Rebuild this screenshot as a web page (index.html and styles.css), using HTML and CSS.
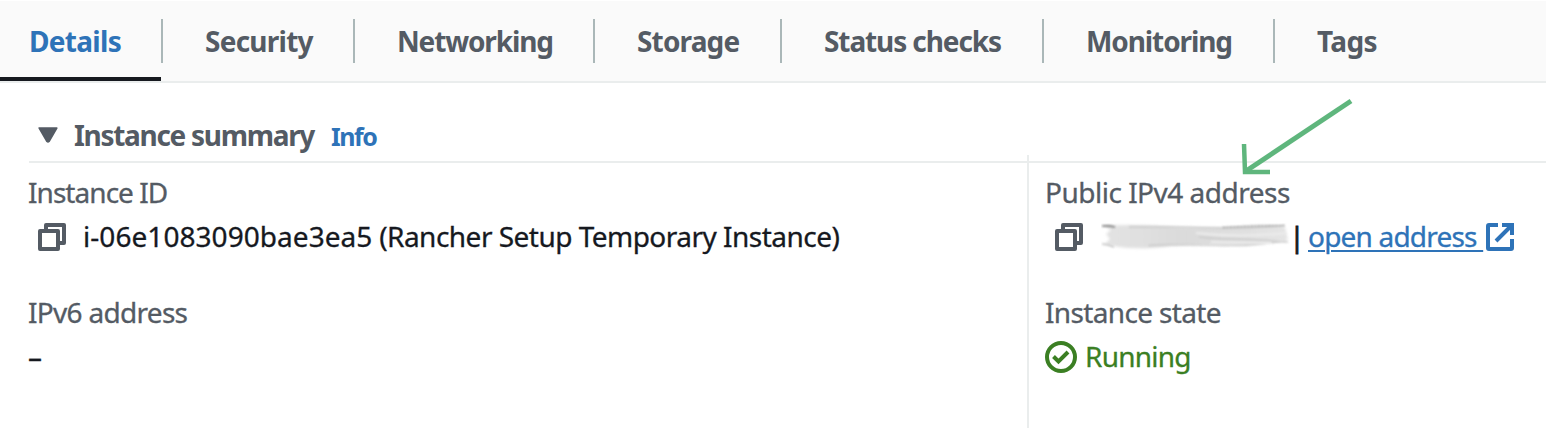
FILE: index.html
```html
<!DOCTYPE html>
<html lang="en">
<head>
<meta charset="utf-8">
<title>Instance details</title>
<link rel="stylesheet" href="styles.css">
</head>
<body>
<nav class="tabs">
  <a class="tab active t-details">Details</a>
  <a class="tab t-security">Security</a>
  <a class="tab t-networking">Networking</a>
  <a class="tab t-storage">Storage</a>
  <a class="tab t-status">Status checks</a>
  <a class="tab t-monitoring">Monitoring</a>
  <a class="tab t-tags">Tags</a>
</nav>
<main class="panel">
  <header class="summary">
    <svg class="caret" width="20" height="16" viewBox="0 0 20 16"><path d="M1.2 1h17.6L11 14.500q-1 1-2 0z" fill="#545b64" stroke="#545b64" stroke-width="1.600" stroke-linejoin="round"/></svg>
    <h2 class="title">Instance summary</h2>
    <a class="info">Info</a>
  </header>
  <div class="columns">
    <section class="column">
      <div class="field">
        <div class="label l-id">Instance ID</div>
        <div class="value">
          <svg class="copy" width="28" height="28" viewBox="0 0 28 28" fill="none" stroke="#545b64" stroke-width="4" stroke-linejoin="round"><path d="M8 7V2h18v18h-5"/><path d="M2 8h18v18H2z"/></svg>
          <div><span class="v-id">i-06e1083090bae3ea5</span><span class="v-name"> (Rancher Setup Temporary Instance)</span></div>
        </div>
      </div>
      <div class="field">
        <div class="label l-ipv6">IPv6 address</div>
        <div class="value">–</div>
      </div>
    </section>
    <section class="column right">
      <div class="field">
        <div class="label l-ipv4">Public IPv4 address</div>
        <div class="value">
          <svg class="copy" width="28" height="28" viewBox="0 0 28 28" fill="none" stroke="#545b64" stroke-width="4" stroke-linejoin="round"><path d="M8 7V2h18v18h-5"/><path d="M2 8h18v18H2z"/></svg>
          <svg class="smudge" width="190" height="32" viewBox="0 0 190 32">
            <defs>
              <filter id="soft" x="-5%" y="-20%" width="110%" height="140%"><feGaussianBlur stdDeviation="1.700"/></filter>
              <filter id="fine"><feGaussianBlur stdDeviation=".8"/></filter>
              <linearGradient id="tone"><stop offset="0" stop-color="#e2e2e2"/><stop offset=".2" stop-color="#e0e0e0"/><stop offset=".45" stop-color="#dadada"/><stop offset=".7" stop-color="#dfdfdf"/><stop offset="1" stop-color="#e4e4e4"/></linearGradient>
            </defs>
            <path d="M3 5Q22 3 60 5Q110 8 145 5Q170 3 184 6L187 19Q165 22 145 25Q110 23 70 25Q40 29 18 26L4 23L9 18L5 13L10 9Z" fill="url(#tone)" filter="url(#soft)"/>
            <g fill="none" filter="url(#fine)">
              <path d="M1 5Q8 4.500 14 6" stroke="#777" stroke-width="1.500"/>
              <path d="M1 23Q7 23 13 26" stroke="#c0c0c0" stroke-width="1.500"/>
              <path d="M28 6Q75 6 110 7T184 4.500" stroke="#c9c9c9" stroke-width="1.500"/>
              <path d="M122 6.500Q146 5 183 4.500" stroke="#888" stroke-width="1.300" stroke-dasharray="2 1.500"/>
              <path d="M48 24.500Q75 23 100 24T145 24T184 20" stroke="#bbb" stroke-width="1.300" stroke-dasharray="2 1"/>
              <path d="M98 16Q118 18 132 18T187 21" stroke="#cacaca" stroke-width="1.500"/>
              <path d="M95 12Q140 17 185 12M110 21Q140 22 170 22" stroke="#ececec" stroke-width="2"/>
            </g>
          </svg>
          <span class="bar">|</span>
          <a class="open">open address&nbsp;</a>
          <svg class="external" width="28" height="28" viewBox="0 0 28 28" fill="none" stroke="#2e73b8" stroke-width="4"><path d="M12 2H3Q2 2 2 3v22q0 1 1 1h22q1 0 1-1v-9"/><path d="M16 2h10v10M25 3 10 18"/></svg>
        </div>
      </div>
      <div class="field">
        <div class="label l-state">Instance state</div>
        <div class="value running">
          <svg class="check" width="32" height="32" viewBox="0 0 32 32" fill="none" stroke="#3b7f23" stroke-width="4"><circle cx="16" cy="16" r="14"/><path d="M8.500 15.500l5 5 9.500-9.500"/></svg>
          <span class="v-state">Running</span>
        </div>
      </div>
    </section>
  </div>
</main>
<svg class="arrow" width="116" height="82" viewBox="0 0 116 82" fill="none" stroke="#5fb67d"><path d="M111 5 6 75" stroke-width="5"/><path d="M4 48 5 76H30" stroke-width="4.500"/></svg>
</body>
</html>
```
FILE: styles.css
```css
* { box-sizing: border-box; }
body {
  margin: 0;
  height: 428px;
  overflow: hidden;
  background: #fff;
  color: #16191f;
  font: 400 28px/44px "Noto Sans", sans-serif;
  white-space: nowrap;
}
.tabs {
  display: flex;
  height: 82px;
  margin-top: 1px;
  border-bottom: 2px solid #eaeded;
  background: #fafafa;
  color: #545b64;
  font-weight: 700;
}
.tab {
  display: flex;
  flex: none;
  padding-top: 18px;
}
.tab + .tab::before {
  content: "";
  flex: none;
  width: 2px;
  height: 44px;
  margin-right: 42px;
  background: #aab7b8;
}
.active {
  width: 161px;
  padding-left: 29px;
  color: #2e73b8;
  border-bottom: 4px solid #16191f;
}
.t-details { letter-spacing: -.7px; }
.t-security { width: 192px; letter-spacing: -.75px; }
.t-networking { width: 240px; letter-spacing: -1.15px; }
.t-storage { width: 187px; letter-spacing: -.85px; }
.t-status { width: 262px; letter-spacing: -1.1px; }
.t-monitoring { width: 231px; letter-spacing: -1.1px; }
.t-tags { letter-spacing: -.6px; }
.panel {
  padding-left: 29px;
}
.summary {
  display: flex;
  height: 80px;
  padding: 30px 0 0 9px;
  border-bottom: 2px solid #eaeded;
}
.caret { margin: 14px 16px 0 0; flex: none; }
.title {
  width: 258px;
  margin: 0;
  color: #545b64;
  font-size: 28px;
  font-weight: 700;
  letter-spacing: -1.3px;
}
.info {
  padding-top: 1px;
  margin-left: -1px;
  color: #2e73b8;
  font-size: 25px;
  font-weight: 700;
  letter-spacing: -1.5px;
}
.columns {
  display: grid;
  grid-template-columns: 998px 1fr;
  height: 265px;
  -webkit-text-stroke: .3px;
}
.column {
  display: flex;
  flex-direction: column;
  gap: 32px;
  padding-top: 7px;
  margin-left: -1px;
}
.right {
  height: 273px;
  margin: -8px 0 0;
  padding: 15px 0 0 16px;
  border-left: 2px solid #eaeded;
}
.label { color: #545b64; }
.l-id { letter-spacing: -.95px; }
.l-ipv6 { letter-spacing: -.7px; }
.l-ipv4 { letter-spacing: -.5px; }
.l-state { letter-spacing: -.65px; }
.value { display: flex; height: 44px; }
.copy { flex: none; margin: 9px 17px 0 10px; }
.right .copy { margin: 9px 18px 0 10px; }
.v-id { letter-spacing: .05px; }
.v-name { letter-spacing: -.52px; }
.smudge { flex: none; margin: 7px 0 0; }
.bar { width: 16px; text-align: center; margin: 0 3px 0 -2px; -webkit-text-stroke: .8px; }
.open {
  width: 177px;
  color: #2e73b8;
  letter-spacing: -.8px;
  text-decoration: underline;
  text-decoration-thickness: 2px;
  text-underline-offset: 3px;
}
.external { flex: none; margin: 9px 0 0 1px; }
.running { color: #3b7f23; }
.check { flex: none; margin: 7px 8px 0 0; }
.v-state { letter-spacing: -.75px; }
.arrow {
  position: absolute;
  left: 1240px;
  top: 96px;
}
```
